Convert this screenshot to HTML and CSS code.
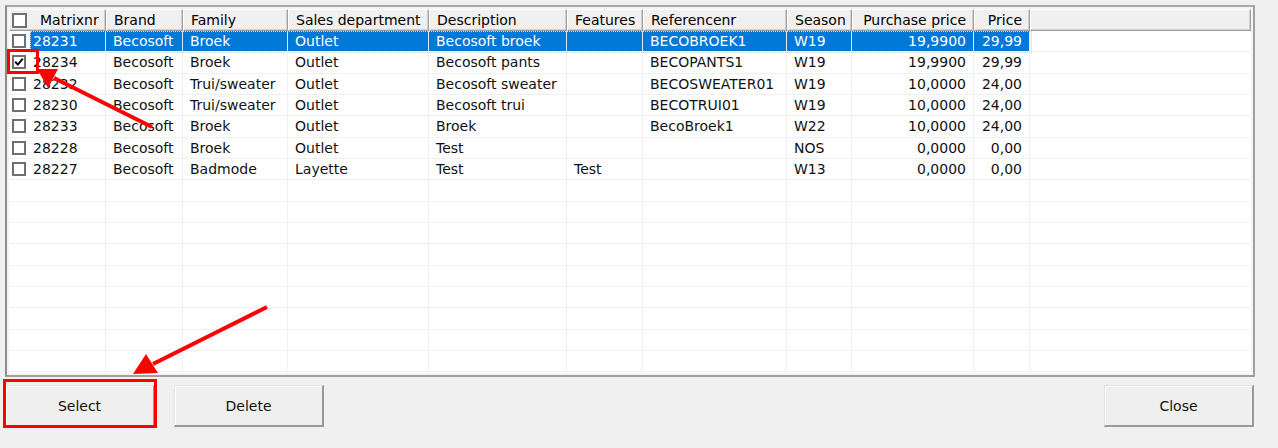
FILE: index.html
```html
<!DOCTYPE html>
<html>
<head>
<meta charset="utf-8">
<link rel="stylesheet" href="styles.css">
</head>
<body>
<div class="window">
  <div class="frame">
    <div class="table">
      <div class="row hrow">
        <div class="hc first"><span class="cb hcb"></span><span class="htxt">Matrixnr</span></div>
        <div class="hc">Brand</div>
        <div class="hc">Family</div>
        <div class="hc">Sales department</div>
        <div class="hc">Description</div>
        <div class="hc">Features</div>
        <div class="hc">Referencenr</div>
        <div class="hc">Season</div>
        <div class="hc r">Purchase price</div>
        <div class="hc r">Price</div>
        <div class="hc fill"></div>
      </div>

      <div class="row sel">
        <div class="c first"><span class="cbwrap"><span class="cb"></span></span><span class="num">28231</span></div>
        <div class="c">Becosoft</div>
        <div class="c">Broek</div>
        <div class="c">Outlet</div>
        <div class="c">Becosoft broek</div>
        <div class="c"></div>
        <div class="c">BECOBROEK1</div>
        <div class="c">W19</div>
        <div class="c r">19,9900</div>
        <div class="c r">29,99</div>
        <div class="c fill"></div>
      </div>
      <div class="row">
        <div class="c first"><span class="cbwrap"><span class="cb checked"><svg width="10" height="10" viewBox="0 0 10 10"><polyline points="1.2,4.8 3.8,7.6 8.8,1.6" fill="none" stroke="#000" stroke-width="2"/></svg></span></span><span class="num">28234</span></div>
        <div class="c">Becosoft</div>
        <div class="c">Broek</div>
        <div class="c">Outlet</div>
        <div class="c">Becosoft pants</div>
        <div class="c"></div>
        <div class="c">BECOPANTS1</div>
        <div class="c">W19</div>
        <div class="c r">19,9900</div>
        <div class="c r">29,99</div>
        <div class="c fill"></div>
      </div>
      <div class="row">
        <div class="c first"><span class="cbwrap"><span class="cb"></span></span><span class="num">28232</span></div>
        <div class="c">Becosoft</div>
        <div class="c">Trui/sweater</div>
        <div class="c">Outlet</div>
        <div class="c">Becosoft sweater</div>
        <div class="c"></div>
        <div class="c">BECOSWEATER01</div>
        <div class="c">W19</div>
        <div class="c r">10,0000</div>
        <div class="c r">24,00</div>
        <div class="c fill"></div>
      </div>
      <div class="row">
        <div class="c first"><span class="cbwrap"><span class="cb"></span></span><span class="num">28230</span></div>
        <div class="c">Becosoft</div>
        <div class="c">Trui/sweater</div>
        <div class="c">Outlet</div>
        <div class="c">Becosoft trui</div>
        <div class="c"></div>
        <div class="c">BECOTRUI01</div>
        <div class="c">W19</div>
        <div class="c r">10,0000</div>
        <div class="c r">24,00</div>
        <div class="c fill"></div>
      </div>
      <div class="row">
        <div class="c first"><span class="cbwrap"><span class="cb"></span></span><span class="num">28233</span></div>
        <div class="c">Becosoft</div>
        <div class="c">Broek</div>
        <div class="c">Outlet</div>
        <div class="c">Broek</div>
        <div class="c"></div>
        <div class="c">BecoBroek1</div>
        <div class="c">W22</div>
        <div class="c r">10,0000</div>
        <div class="c r">24,00</div>
        <div class="c fill"></div>
      </div>
      <div class="row">
        <div class="c first"><span class="cbwrap"><span class="cb"></span></span><span class="num">28228</span></div>
        <div class="c">Becosoft</div>
        <div class="c">Broek</div>
        <div class="c">Outlet</div>
        <div class="c">Test</div>
        <div class="c"></div>
        <div class="c"></div>
        <div class="c">NOS</div>
        <div class="c r">0,0000</div>
        <div class="c r">0,00</div>
        <div class="c fill"></div>
      </div>
      <div class="row">
        <div class="c first"><span class="cbwrap"><span class="cb"></span></span><span class="num">28227</span></div>
        <div class="c">Becosoft</div>
        <div class="c">Badmode</div>
        <div class="c">Layette</div>
        <div class="c">Test</div>
        <div class="c">Test</div>
        <div class="c"></div>
        <div class="c">W13</div>
        <div class="c r">0,0000</div>
        <div class="c r">0,00</div>
        <div class="c fill"></div>
      </div>

      <div class="row"><div class="c"></div><div class="c"></div><div class="c"></div><div class="c"></div><div class="c"></div><div class="c"></div><div class="c"></div><div class="c"></div><div class="c"></div><div class="c"></div><div class="c fill"></div></div>
      <div class="row"><div class="c"></div><div class="c"></div><div class="c"></div><div class="c"></div><div class="c"></div><div class="c"></div><div class="c"></div><div class="c"></div><div class="c"></div><div class="c"></div><div class="c fill"></div></div>
      <div class="row"><div class="c"></div><div class="c"></div><div class="c"></div><div class="c"></div><div class="c"></div><div class="c"></div><div class="c"></div><div class="c"></div><div class="c"></div><div class="c"></div><div class="c fill"></div></div>
      <div class="row"><div class="c"></div><div class="c"></div><div class="c"></div><div class="c"></div><div class="c"></div><div class="c"></div><div class="c"></div><div class="c"></div><div class="c"></div><div class="c"></div><div class="c fill"></div></div>
      <div class="row"><div class="c"></div><div class="c"></div><div class="c"></div><div class="c"></div><div class="c"></div><div class="c"></div><div class="c"></div><div class="c"></div><div class="c"></div><div class="c"></div><div class="c fill"></div></div>
      <div class="row"><div class="c"></div><div class="c"></div><div class="c"></div><div class="c"></div><div class="c"></div><div class="c"></div><div class="c"></div><div class="c"></div><div class="c"></div><div class="c"></div><div class="c fill"></div></div>
      <div class="row"><div class="c"></div><div class="c"></div><div class="c"></div><div class="c"></div><div class="c"></div><div class="c"></div><div class="c"></div><div class="c"></div><div class="c"></div><div class="c"></div><div class="c fill"></div></div>
      <div class="row"><div class="c"></div><div class="c"></div><div class="c"></div><div class="c"></div><div class="c"></div><div class="c"></div><div class="c"></div><div class="c"></div><div class="c"></div><div class="c"></div><div class="c fill"></div></div>
      <div class="row"><div class="c"></div><div class="c"></div><div class="c"></div><div class="c"></div><div class="c"></div><div class="c"></div><div class="c"></div><div class="c"></div><div class="c"></div><div class="c"></div><div class="c fill"></div></div>
      <div class="row"><div class="c"></div><div class="c"></div><div class="c"></div><div class="c"></div><div class="c"></div><div class="c"></div><div class="c"></div><div class="c"></div><div class="c"></div><div class="c"></div><div class="c fill"></div></div>
    </div>
  </div>

  <div class="buttons">
    <button class="btn">Select</button>
    <button class="btn">Delete</button>
    <button class="btn close">Close</button>
  </div>

  <svg class="annot" width="1278" height="448" viewBox="0 0 1278 448">
    <rect x="8.5" y="50.5" width="29" height="22" fill="none" stroke="#ff0000" stroke-width="3"/>
    <line x1="152" y1="127" x2="54" y2="78" stroke="#ff0000" stroke-width="4"/>
    <polygon points="37,69 58,69 48,88" fill="#ff0000"/>
    <rect x="4.5" y="380.5" width="151" height="46" fill="none" stroke="#ff0000" stroke-width="3"/>
    <line x1="267" y1="307" x2="153" y2="364" stroke="#ff0000" stroke-width="4"/>
    <polygon points="133,374 146,354 158,373" fill="#ff0000"/>
  </svg>
</div>
</body>
</html>
```

FILE: styles.css
```css
* { box-sizing: border-box; }

html, body {
  margin: 0;
  padding: 0;
  background: #f0f0f0;
}

body {
  font-family: "DejaVu Sans", Verdana, sans-serif;
  font-size: 14px;
  color: #000;
}

.window {
  position: relative;
  width: 1278px;
  height: 448px;
  padding: 5px 0 0 5px;
}

.frame {
  width: 1250px;
  height: 372px;
  border: 2px solid #a0a0a0;
  border-left-color: #8c8c8c;
  border-top-color: #a8a8a8;
  padding: 2px;
  background: #f4f4f4;
}

.table {
  width: 100%;
  height: 100%;
  background: #fff;
  overflow: hidden;
  display: flex;
  flex-direction: column;
}

.row {
  display: grid;
  grid-template-columns: 97px 77px 105px 141px 138px 76px 144px 65px 122px 56px 1fr;
  height: 21.34px;
  flex: none;
  position: relative;
}

.hrow {
  height: 22px;
}

.hc {
  background: #f0f0f0;
  border-top: 1px solid #fff;
  border-left: 1px solid #fff;
  border-right: 1px solid #a0a0a0;
  border-bottom: 1px solid #a0a0a0;
  box-shadow: inset -1px -1px 0 #cfcfcf;
  padding: 0 7px;
  line-height: 20px;
  white-space: nowrap;
  overflow: hidden;
}

.hc.first {
  display: flex;
  align-items: center;
  padding: 0 0 0 2px;
}

.hc.r { text-align: right; padding-right: 7px; }

.htxt { margin-left: 13px; }

.cb {
  display: inline-block;
  width: 14px;
  height: 14px;
  border: 2px solid #707070;
  background: #fff;
  flex: none;
  position: relative;
}

.hcb { width: 15px; height: 15px; }

.cb svg {
  position: absolute;
  left: 0;
  top: 0;
}

.c {
  border-right: 1px solid #f0f0f0;
  border-bottom: 1px solid #f0f0f0;
  padding: 0 7px;
  line-height: 20px;
  white-space: nowrap;
  overflow: hidden;
  color: #111;
}

.c.r { text-align: right; padding-right: 7px; }
.c.fill { border-right: none; }

.c.first {
  display: flex;
  padding: 0;
}

.cbwrap {
  width: 21px;
  flex: none;
  display: flex;
  align-items: center;
  padding-left: 3px;
  background: #fff;
}

.num {
  flex: 1;
  padding-left: 3px;
}

.sel .c { background: #0078d7; color: #fff; border-right-color: #d8e8f6; }
.sel .c.first { background: #fff; }
.sel .num { background: #0078d7; color: #fff; }
.sel .c.fill { background: #fff; }

.sel::after {
  content: "";
  position: absolute;
  left: 21px;
  top: 0;
  width: 1000px;
  height: 20px;
  border: 1px dotted #bcd9f2;
  pointer-events: none;
}

.buttons {
  display: flex;
  margin-top: 8px;
  gap: 19px;
  padding-right: 24px;
}

.btn {
  width: 150px;
  height: 42px;
  background: #efefef;
  font-family: "DejaVu Sans", Verdana, sans-serif;
  font-size: 14px;
  color: #111;
  border-top: 1px solid #e3e3e3;
  border-left: 1px solid #e3e3e3;
  border-right: 2px solid #9a9a9a;
  border-bottom: 2px solid #9a9a9a;
  box-shadow: inset 1px 1px 0 #fff;
  padding: 0;
}

.btn.close { margin-left: auto; }

.annot {
  position: absolute;
  left: 0;
  top: 0;
  pointer-events: none;
}
```
